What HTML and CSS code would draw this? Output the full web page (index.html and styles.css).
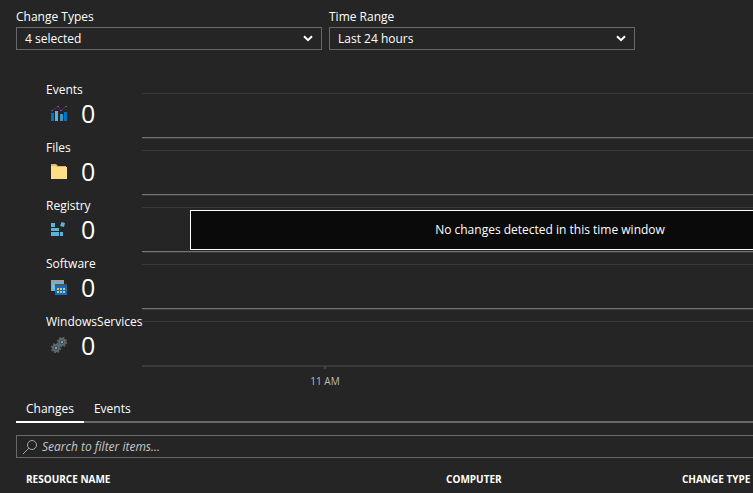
FILE: index.html
```html
<!DOCTYPE html>
<html lang="en">
<head>
<meta charset="utf-8">
<title>Change tracking</title>
<link rel="stylesheet" href="styles.css">
</head>
<body>
<main>
  <form class="filters">
    <div class="field">
      <label for="types">Change Types</label>
      <div class="picker">
        <select id="types"><option>4 selected</option></select>
        <svg class="chevron" viewBox="0 0 10 7" aria-hidden="true"><path d="M1 1.2l4 4 4-4"/></svg>
      </div>
    </div>
    <div class="field">
      <label for="range">Time Range</label>
      <div class="picker">
        <select id="range"><option>Last 24 hours</option></select>
        <svg class="chevron" viewBox="0 0 10 7" aria-hidden="true"><path d="M1 1.2l4 4 4-4"/></svg>
      </div>
    </div>
  </form>

  <section class="overview">
    <ul class="legend">
      <li>
        <span class="name">Events</span>
        <div class="stat">
          <svg class="icon" viewBox="0 0 16 16" aria-hidden="true">
            <path fill="#0072c6" d="M0 8h3v8H0zM13 7h3v9h-3z"/>
            <path fill="#59b4d9" d="M4 6h3v10H4z"/>
            <path fill="#3999c6" d="M9 9h3v7H9z"/>
            <path fill="none" stroke="#68217a" d="M1 5.5l6-4 3 4 5-4"/>
            <path fill="#804998" d="M0 5h2v1H0zM6 1h2v1H6zM9 5h2v1H9zM14 1h2v1h-2z"/>
          </svg>
          <span class="count">0</span>
        </div>
      </li>
      <li>
        <span class="name">Files</span>
        <div class="stat">
          <svg class="icon" viewBox="0 0 16 16" aria-hidden="true">
            <path fill="#dfb967" d="M0 1h5l2 2h8v3H0z"/>
            <path fill="#ffdf85" d="M0 3h5l1 1h10v12H0z"/>
          </svg>
          <span class="count">0</span>
        </div>
      </li>
      <li>
        <span class="name">Registry</span>
        <div class="stat">
          <svg class="icon" viewBox="0 0 16 16" aria-hidden="true">
            <path fill="#59b4d9" d="M0 2h4v4H0zM0 7h8v3H0zM0 11h8v4H0zM9 11h3v4H9zM10.5 1l3.5 1-1 4-4-1z"/>
          </svg>
          <span class="count">0</span>
        </div>
      </li>
      <li>
        <span class="name">Software</span>
        <div class="stat">
          <svg class="icon" viewBox="0 0 16 16" aria-hidden="true">
            <path fill="#6fb4c8" d="M0 1h13v11H0z"/>
            <path fill="#9aa0a3" d="M0 1h13v2H0z"/>
            <path fill="#b8d432" d="M2 6h1v4H2z"/>
            <path fill="#0f6fc6" d="M4 6h12v10H4z"/>
            <path fill="#505558" d="M4 5h12v2H4z"/>
            <path fill="#f2b84b" d="M6 9h2v2H6zM12 9h2v2h-2zM9 12h2v2H9z"/>
            <path fill="#a4d6a0" d="M9 9h2v2H9zM6 12h2v2H6zM12 12h2v2h-2z"/>
          </svg>
          <span class="count">0</span>
        </div>
      </li>
      <li>
        <span class="name">WindowsServices</span>
        <div class="stat">
          <svg class="icon" viewBox="0 0 16 16" aria-hidden="true">
            <g fill="#3f464a" stroke="#626669" stroke-width="2">
              <circle cx="5" cy="11" r="3"/><circle cx="11" cy="5" r="3"/>
            </g>
            <g fill="none" stroke="#626669" stroke-width="1.5" stroke-dasharray="1.7 1.84">
              <circle cx="5" cy="11" r="4.5"/><circle cx="11" cy="5" r="4.5"/>
            </g>
            <path fill="#42b4e0" d="M4 10h2v2H4zM10 4h2v2h-2z"/>
          </svg>
          <span class="count">0</span>
        </div>
      </li>
    </ul>

    <div class="chart">
      <div class="lane"></div>
      <div class="lane"></div>
      <div class="lane"></div>
      <div class="lane"></div>
      <div class="lane last"></div>
      <div class="axis"><span>11 AM</span></div>
      <div class="notice" role="status">No changes detected in this time window</div>
    </div>
  </section>

  <section class="results">
    <nav class="tabs">
      <button type="button" class="tab active">Changes</button>
      <button type="button" class="tab">Events</button>
    </nav>
    <div class="search">
      <svg class="glass" viewBox="0 0 16 16" aria-hidden="true"><circle cx="10" cy="6" r="4.5"/><path d="M6.8 9.2L1 15"/></svg>
      <input type="search" aria-label="Search to filter items" placeholder="Search to filter items...">
    </div>
    <table>
      <thead>
        <tr><th class="resource">RESOURCE NAME</th><th class="computer">COMPUTER</th><th>CHANGE TYPE</th></tr>
      </thead>
    </table>
  </section>
</main>
</body>
</html>
```
FILE: styles.css
```css
* {
  box-sizing: border-box;
}

body {
  margin: 0;
  background: #252525;
  color: #fff;
  font: 12px/18px "Open Sans", "Noto Sans", sans-serif;
}

main {
  padding: 8px 0 0 16px;
  overflow: hidden;
}

select,
input,
button {
  color: inherit;
  font: inherit;
}

.filters {
  display: flex;
  gap: 7px;
  padding-right: 16px;
}

.field {
  flex: 1;
  max-width: 306px;
}

.field label {
  display: block;
  margin-bottom: 1px;
}

.picker {
  display: grid;
  align-items: center;
}

.picker > * {
  grid-area: 1 / 1;
}

.picker select {
  width: 100%;
  height: 23px;
  padding: 0 8px;
  appearance: none;
  background: transparent;
  border: 1px solid #686868;
  border-radius: 0;
}

.chevron {
  justify-self: end;
  width: 10px;
  height: 7px;
  margin-right: 9px;
  fill: none;
  stroke: #fff;
  stroke-width: 2;
  pointer-events: none;
}

.overview {
  display: flex;
  margin-top: 31px;
}

.legend {
  flex: 0 0 126px;
  min-width: 0;
  margin: 0;
  padding: 0 0 0 30px;
  list-style: none;
}

.legend li {
  height: 58px;
  white-space: nowrap;
}

.name {
  display: block;
}

.stat {
  display: flex;
  align-items: center;
  gap: 14px;
  height: 28px;
  padding-left: 5px;
}

.icon {
  width: 16px;
  height: 16px;
}

.count {
  font-size: 25px;
  line-height: 28px;
}

.chart {
  position: relative;
  flex: 1;
}

.lane {
  height: 57px;
  padding-top: 12px;
  border-bottom: 1px solid #747474;
}

.lane::before {
  content: "";
  display: block;
  height: 44px;
  border: solid #393939;
  border-width: 1px 0;
}

.lane.last {
  border-color: #393939;
}

.axis {
  width: 60px;
  margin-left: 153px;
  color: #bbb;
  font-size: 10px;
  line-height: 24px;
  text-align: center;
}

.axis::before {
  content: "";
  display: block;
  width: 2px;
  height: 3px;
  margin: 0 auto;
  background: #444;
}

.notice {
  position: absolute;
  top: 129px;
  left: 48px;
  right: -157px;
  padding: 10px;
  background: #0a0a0a;
  border: 1px solid #fff;
  line-height: 18px;
  text-align: center;
}

.results {
  margin-top: 4px;
}

.tabs {
  display: flex;
  border-bottom: 2px solid #686868;
}

.tab {
  margin-bottom: -2px;
  padding: 3px 10px;
  background: none;
  border: 0;
  border-bottom: 2px solid transparent;
}

.tab.active {
  border-color: #fff;
}

.search {
  display: flex;
  align-items: center;
  gap: 4px;
  height: 23px;
  margin-top: 12px;
  padding-left: 5px;
  border: 1px solid #686868;
  border-right: 0;
}

.glass {
  width: 16px;
  height: 16px;
  fill: none;
  stroke: #a8a8a8;
}

.search input {
  flex: 1;
  padding: 0;
  background: none;
  border: 0;
  outline: 0;
}

.search input::placeholder {
  color: #c8c8c8;
  font-style: italic;
}

table {
  width: 100%;
  margin-top: 12px;
  border-collapse: collapse;
  table-layout: fixed;
}

th {
  padding: 0 0 0 10px;
  font-size: 10px;
  font-weight: 700;
  text-align: left;
  white-space: nowrap;
}

.resource {
  width: 57%;
}

.computer {
  width: 32%;
}
```
